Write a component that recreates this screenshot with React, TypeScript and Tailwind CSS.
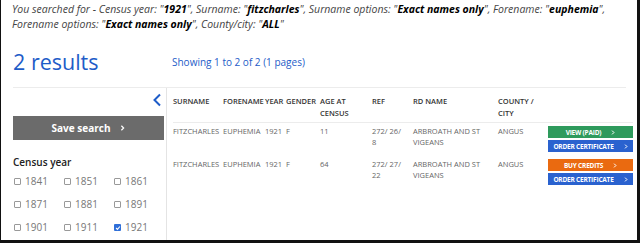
import React from "react";

const font = { fontFamily: '"Open Sans", "Liberation Sans", sans-serif' };

const years = ["1841", "1851", "1861", "1871", "1881", "1891", "1901", "1911", "1921"];

const rows = [
  { age: "11", ref1: "272/ 26/", ref2: "8", buttons: "paid" },
  { age: "64", ref1: "272/ 27/", ref2: "22", buttons: "buy" },
];

function Chevron({ className }: { className?: string }) {
  return (
    <svg viewBox="0 0 6 8" className={className} fill="none" stroke="currentColor" strokeWidth="1.6">
      <path d="M1.5 1 L4.5 4 L1.5 7" />
    </svg>
  );
}

function ActionButton({ label, color }: { label: string; color: string }) {
  return (
    <div className={`flex h-[12px] w-[85px] items-center justify-center gap-[10px] text-[6.5px] font-bold tracking-[-0.2px] text-white ${color}`}>
      <span>{label}</span>
      <Chevron className="h-[5px] w-[4px]" />
    </div>
  );
}

export default function App() {
  return (
    <div className="h-[243px] w-[640px] overflow-hidden bg-white" style={font}>
      <div className="flex h-[243px] flex-col border-b-[3px] border-l border-r-[3px] border-[#111]">
        <div className="pl-[11px] pt-[2px] text-[10.5px] italic leading-[15px] text-[#444]">
          <div>
            You searched for - Census year: "<b className="text-black">1921</b>", Surname: "<b className="text-black">fitzcharles</b>", Surname options: "<b className="text-black">Exact names only</b>", Forename: "<b className="text-black">euphemia</b>",
          </div>
          <div>
            Forename options: "<b className="text-black">Exact names only</b>", County/city: "<b className="text-black">ALL</b>"
          </div>
        </div>

        <div className="mt-[15px] flex items-center pl-[12px]">
          <div className="w-[159px] text-[21.5px] leading-[30px] text-[#1e5cc8]">2 results</div>
          <div className="text-[10px] text-[#1e5cc8]">Showing 1 to 2 of 2 (1 pages)</div>
        </div>

        <div className="ml-[12px] mr-[11px] mt-[10px] flex flex-1 border-t border-[#ececec]">
          <div className="w-[151px] shrink-0 pt-[5px]">
            <div className="flex justify-end pr-[2px]">
              <svg viewBox="0 0 10 14" className="h-[14px] w-[10px] text-[#1e5cc8]" fill="none" stroke="currentColor" strokeWidth="2">
                <path d="M8 1.5 L2.5 7 L8 12.5" />
              </svg>
            </div>
            <div className="mt-[9px] flex h-[24px] items-center justify-center gap-[10px] bg-[#6b6b6b] text-[10px] font-bold text-white">
              <span>Save search</span>
              <Chevron className="h-[6px] w-[5px]" />
            </div>
            <div className="mt-[15px] text-[10px] font-semibold leading-[14px] text-[#222]">Census year</div>
            <div className="mt-[6px] grid grid-cols-3 gap-y-[10px] pl-[1px]">
              {years.map((y) => (
                <div key={y} className="flex h-[13px] items-center gap-[4px] text-[10px] text-[#777]">
                  {y === "1921" ? (
                    <span className="flex h-[7px] w-[7px] items-center justify-center rounded-[1px] bg-[#2f6fd8]">
                      <svg viewBox="0 0 8 8" className="h-[6px] w-[6px]" fill="none" stroke="white" strokeWidth="1.5">
                        <path d="M1.5 4 L3.3 5.8 L6.5 2" />
                      </svg>
                    </span>
                  ) : (
                    <span className="h-[7px] w-[7px] rounded-[1px] border border-[#999]" />
                  )}
                  <span>{y}</span>
                </div>
              ))}
            </div>
          </div>

          <div className="ml-[2px] min-w-0 flex-1 border-l border-[#e4e4e4] pl-[6px] pt-[7px]">
            <div className="grid w-[460px] grid-cols-[50px_42px_21px_34px_52px_41px_85px_50px_85px] border-b border-[#ececec] pb-[3px] text-[7.5px] font-semibold leading-[12px] text-[#333]">
              <div>SURNAME</div>
              <div>FORENAME</div>
              <div>YEAR</div>
              <div>GENDER</div>
              <div>AGE AT<br />CENSUS</div>
              <div>REF</div>
              <div>RD NAME</div>
              <div>COUNTY /<br />CITY</div>
              <div />
            </div>
            {rows.map((r, i) => (
              <div
                key={i}
                className="grid w-[460px] grid-cols-[50px_42px_21px_34px_52px_41px_85px_50px_85px] pb-[4px] pt-[3px] text-[7.5px] leading-[11px] text-[#666]"
              >
                <div>FITZCHARLES</div>
                <div>EUPHEMIA</div>
                <div>1921</div>
                <div>F</div>
                <div>{r.age}</div>
                <div>{r.ref1}<br />{r.ref2}</div>
                <div>ARBROATH AND ST<br />VIGEANS</div>
                <div>ANGUS</div>
                <div className="flex flex-col gap-[2px]">
                  {r.buttons === "paid" ? (
                    <ActionButton label="VIEW (PAID)" color="bg-[#2e9a5c]" />
                  ) : (
                    <ActionButton label="BUY CREDITS" color="bg-[#ea6a10]" />
                  )}
                  <ActionButton label="ORDER CERTIFICATE" color="bg-[#2a62cf]" />
                </div>
              </div>
            ))}
          </div>
        </div>
      </div>
    </div>
  );
}
